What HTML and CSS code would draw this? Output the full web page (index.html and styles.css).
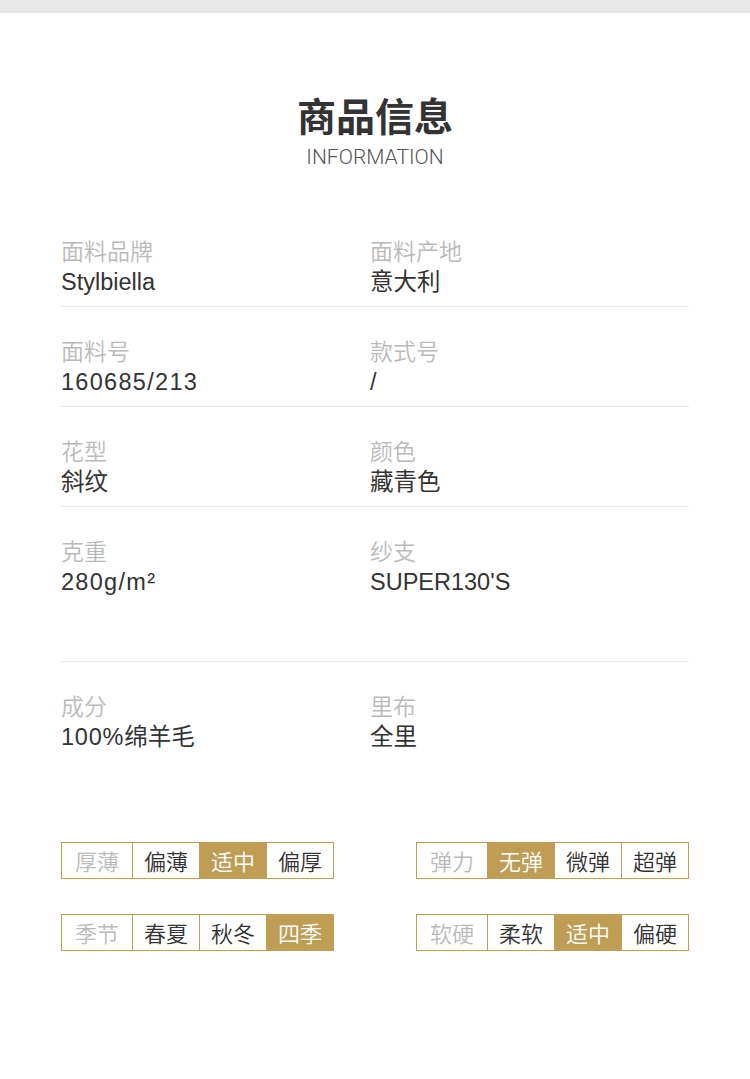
FILE: index.html
```html
<!DOCTYPE html>
<html lang="zh-CN">
<head>
<meta charset="utf-8">
<title>商品信息</title>
<link rel="stylesheet" href="styles.css">
</head>
<body>
<div class="topbar"></div>
<header class="head">
  <h1 class="title">商品信息</h1>
  <div class="subtitle">INFORMATION</div>
</header>
<section class="info">
  <div class="row">
    <div class="cell"><div class="label">面料品牌</div><div class="value">Stylbiella</div></div>
    <div class="cell"><div class="label">面料产地</div><div class="value">意大利</div></div>
  </div>
  <div class="row">
    <div class="cell"><div class="label">面料号</div><div class="value num">160685/213</div></div>
    <div class="cell"><div class="label">款式号</div><div class="value">/</div></div>
  </div>
  <div class="row">
    <div class="cell"><div class="label">花型</div><div class="value">斜纹</div></div>
    <div class="cell"><div class="label">颜色</div><div class="value">藏青色</div></div>
  </div>
  <div class="row row-tall">
    <div class="cell"><div class="label">克重</div><div class="value num">280g/m²</div></div>
    <div class="cell"><div class="label">纱支</div><div class="value">SUPER130'S</div></div>
  </div>
  <div class="row row-last">
    <div class="cell"><div class="label">成分</div><div class="value"><span class="pct">100%</span>绵羊毛</div></div>
    <div class="cell"><div class="label">里布</div><div class="value">全里</div></div>
  </div>
</section>
<section class="tags">
  <div class="tag-row">
    <div class="group">
      <span class="tag tag-head">厚薄</span><span class="tag">偏薄</span><span class="tag on">适中</span><span class="tag">偏厚</span>
    </div>
    <div class="group">
      <span class="tag tag-head">弹力</span><span class="tag on">无弹</span><span class="tag">微弹</span><span class="tag">超弹</span>
    </div>
  </div>
  <div class="tag-row">
    <div class="group">
      <span class="tag tag-head">季节</span><span class="tag">春夏</span><span class="tag">秋冬</span><span class="tag on">四季</span>
    </div>
    <div class="group">
      <span class="tag tag-head">软硬</span><span class="tag">柔软</span><span class="tag on">适中</span><span class="tag">偏硬</span>
    </div>
  </div>
</section>
</body>
</html>
```
FILE: styles.css
```css
* { box-sizing: border-box; margin: 0; padding: 0; }
html, body { background: #fff; }
body {
  width: 750px;
  font-family: "Liberation Sans", "Noto Sans CJK SC", sans-serif;
  color: #333;
}
.topbar { height: 13px; background: #e8e8e8; }
.head { text-align: center; padding-top: 77px; }
.title {
  font-family: "Noto Sans CJK SC", sans-serif;
  font-size: 39px;
  line-height: 48px;
  font-weight: 700;
  color: #333;
}
.subtitle {
  margin-top: 7px;
  font-family: Roboto, "Liberation Sans", sans-serif;
  font-weight: 300;
  font-size: 21px;
  line-height: 24px;
  color: #555;
}
.info { margin: 38px 61px 0; }
.row {
  display: grid;
  grid-template-columns: 309px 1fr;
  padding: 27px 0 8px;
  border-bottom: 1px solid #e9e9e9;
}
.row-tall { padding-bottom: 63px; }
.row-last { border-bottom: none; }
.label {
  font-family: "Noto Sans CJK SC", sans-serif;
  font-weight: 350;
  font-size: 23px;
  line-height: 32px;
  color: #bababa;
}
.value {
  font-size: 23.5px;
  line-height: 32px;
  color: #333;
}
.num { letter-spacing: 1.3px; }
.pct { letter-spacing: 0.8px; }
.tags { margin: 81px 61px 0; display: flex; flex-direction: column; gap: 35px; }
.tag-row { display: flex; justify-content: space-between; }
.group {
  display: flex;
  border: 1px solid #bf9d55;
}
.tag {
  width: 67px;
  height: 35px;
  line-height: 35px;
  text-align: center;
  font-family: "Noto Sans CJK SC", sans-serif;
  font-weight: 350;
  font-size: 22px;
  color: #333;
  border-left: 1px solid #bf9d55;
}
.tag-head { width: 70px; border-left: none; color: #bababa; }
.tag.on { background: #bf9d55; color: #fff; }
```
